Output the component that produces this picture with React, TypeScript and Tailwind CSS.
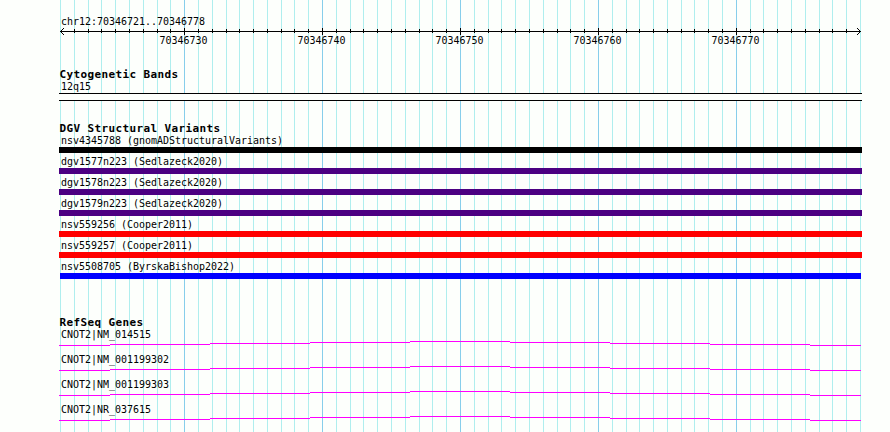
type Variant = { name: string; color: string };

const START = 70346720;
const LEFT = 60;
const SPAN = 800;
const BASES = 58;

const variants: Variant[] = [
  { name: "nsv4345788 (gnomADStructuralVariants)", color: "bg-black" },
  { name: "dgv1577n223 (Sedlazeck2020)", color: "bg-[#4b0082]" },
  { name: "dgv1578n223 (Sedlazeck2020)", color: "bg-[#4b0082]" },
  { name: "dgv1579n223 (Sedlazeck2020)", color: "bg-[#4b0082]" },
  { name: "nsv559256 (Cooper2011)", color: "bg-[#ff0000]" },
  { name: "nsv559257 (Cooper2011)", color: "bg-[#ff0000]" },
  { name: "nsv5508705 (ByrskaBishop2022)", color: "mx-px bg-[#0000ff]" },
];

const genes = [
  "CNOT2|NM_014515",
  "CNOT2|NM_001199302",
  "CNOT2|NM_001199303",
  "CNOT2|NR_037615",
];

// One entry per base, snapped to whole pixels. Every tenth base is major.
const ticks = Array.from({ length: BASES + 1 }, (_, i) => ({
  x: Math.round(LEFT + (i * SPAN) / BASES),
  major: i % 10 === 9,
  pos: START + i + 1,
}));

function Gridlines() {
  return (
    <svg
      className="absolute inset-0"
      width="890"
      height="432"
      shapeRendering="crispEdges"
    >
      {ticks.map((t) => (
        <rect
          key={t.pos}
          x={t.x}
          y="0"
          width="1"
          height="432"
          fill={t.major ? "#87ceeb" : "#afeeee"}
        />
      ))}
    </svg>
  );
}

function Label({ children }: { children: string }) {
  return (
    <div className="ml-[1.5px] h-[15px] w-max origin-left scale-x-[0.906] whitespace-pre font-['DejaVu_Sans_Mono',monospace] text-[11px] leading-[17px]">
      {children}
    </div>
  );
}

function Heading({ children }: { children: string }) {
  return (
    <h2 className="ml-[0.5px] h-[12px] whitespace-pre font-['DejaVu_Sans_Mono',monospace] text-[11px] font-bold leading-[14px] tracking-[0.378px]">
      {children}
    </h2>
  );
}

function Ruler() {
  return (
    <svg
      className="block overflow-visible"
      width="803"
      height="20"
      viewBox="59 28 803 20"
      shapeRendering="crispEdges"
    >
      <rect x="60" y="31" width="801" height="1" />
      {ticks.slice(1, -1).map((t) => (
        <rect
          key={t.pos}
          x={t.x}
          y={t.major ? 28 : 29}
          width="1"
          height={t.major ? 7 : 4}
        />
      ))}
      <path d="M61 30h1v-1h1v-1h1v1h-1v1h-1v1h-1zM61 32h1v1h1v1h1v1h-1v-1h-1v-1h-1z" />
      <path d="M860 30h-1v-1h-1v-1h-1v1h1v1h1v1h1zM860 32h-1v1h-1v1h-1v1h1v-1h1v-1h1z" />
      {ticks
        .filter((t) => t.major)
        .map((t) => (
          <text
            key={t.pos}
            x={t.x - 24.5}
            y="44"
            textLength="48"
            lengthAdjust="spacingAndGlyphs"
            className="font-['DejaVu_Sans_Mono',monospace] text-[11px]"
          >
            {t.pos}
          </text>
        ))}
    </svg>
  );
}

function Intron() {
  return (
    <svg
      className="block"
      width="803"
      height="10"
      viewBox="59 341 803 10"
      shapeRendering="crispEdges"
      fill="#ff00ff"
    >
      <rect x="59" y="345" width="51" height="1" />
      <rect x="110" y="344" width="100" height="1" />
      <rect x="210" y="343" width="100" height="1" />
      <rect x="310" y="342" width="100" height="1" />
      <rect x="410" y="341" width="100" height="1" />
      <rect x="510" y="342" width="100" height="1" />
      <rect x="610" y="343" width="100" height="1" />
      <rect x="710" y="344" width="100" height="1" />
      <rect x="810" y="345" width="51" height="1" />
    </svg>
  );
}

export default function App() {
  return (
    <div className="relative h-[432px] w-[890px] overflow-hidden bg-[#fdfffc] text-black">
      <Gridlines />
      <main className="relative ml-[59px] w-[803px] pt-[13px]">
        <Label>chr12:70346721..70346778</Label>
        <Ruler />

        <section className="pt-5">
          <Heading>Cytogenetic Bands</Heading>
          <div className="-mt-0.5">
            <Label>12q15</Label>
          </div>
          <div className="h-2 border-y border-black bg-[#fdfffc]" />
        </section>

        <section className="pt-[21px]">
          <Heading>DGV Structural Variants</Heading>
          <div className="-mt-0.5">
            {variants.map((v) => (
              <div key={v.name}>
                <Label>{v.name}</Label>
                <div className={`h-1.5 ${v.color}`} />
              </div>
            ))}
          </div>
        </section>

        <section className="pt-[37px]">
          <Heading>RefSeq Genes</Heading>
          <div className="-mt-0.5">
            {genes.map((g) => (
              <div key={g} className="h-[25px]">
                <Label>{g}</Label>
                <Intron />
              </div>
            ))}
          </div>
        </section>
      </main>
    </div>
  );
}
